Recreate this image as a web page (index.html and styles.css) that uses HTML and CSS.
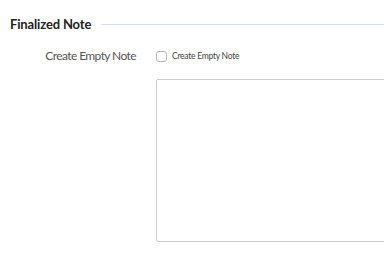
FILE: index.html
```html
<!DOCTYPE html>
<html lang="en">
<head>
  <meta charset="UTF-8">
  <title>Finalized Note</title>
  <link rel="stylesheet" href="styles.css">
</head>
<body>

<fieldset class="section">
  <div class="section-title">
    <span>Finalized Note</span>
    <span class="rule"></span>
  </div>

  <div class="form-row">
    <label class="form-label">Create Empty Note</label>
    <label class="check">
      <input type="checkbox">
      <span class="box"></span>
      <span class="check-text">Create Empty Note</span>
    </label>
  </div>

  <div class="form-row">
    <span class="form-label"></span>
    <textarea class="note"></textarea>
  </div>
</fieldset>

</body>
</html>
```

FILE: styles.css
```css
* {
  box-sizing: border-box;
}

body {
  margin: 0;
  background: #fff;
  font-family: Lato, 'Open Sans', sans-serif;
  color: #333;
  overflow: hidden;
}

.section {
  border: none;
  margin: 0;
  padding: 15px 0 0 10px;
}

.section-title {
  display: flex;
  align-items: center;
  gap: 10px;
  font-size: 13px;
  font-weight: bold;
  letter-spacing: -0.15px;
  color: #222;
  height: 17px;
}

.rule {
  flex: 1;
  height: 1px;
  background: #d8dcef;
  margin-top: 2px;
}

.form-row {
  display: flex;
  align-items: flex-start;
  margin-top: 17px;
}

.form-row + .form-row {
  margin-top: 16px;
}

.form-label {
  width: 126px;
  text-align: right;
  font-size: 12px;
  letter-spacing: -0.6px;
  color: #555;
  flex: none;
  line-height: 14px;
}

.check {
  display: flex;
  align-items: center;
  margin-left: 20px;
  gap: 5px;
  height: 14px;
}

.check input {
  display: none;
}

.box {
  width: 11px;
  height: 11px;
  border: 1px solid #b5b5b5;
  border-radius: 3px;
  background: #fff;
}

.check-text {
  font-size: 8.5px;
  letter-spacing: -0.25px;
  color: #444;
}

.note {
  margin-left: 20px;
  width: 258px;
  height: 163px;
  border: 1px solid #ccc;
  border-radius: 2px;
  resize: none;
  flex: none;
}
```
